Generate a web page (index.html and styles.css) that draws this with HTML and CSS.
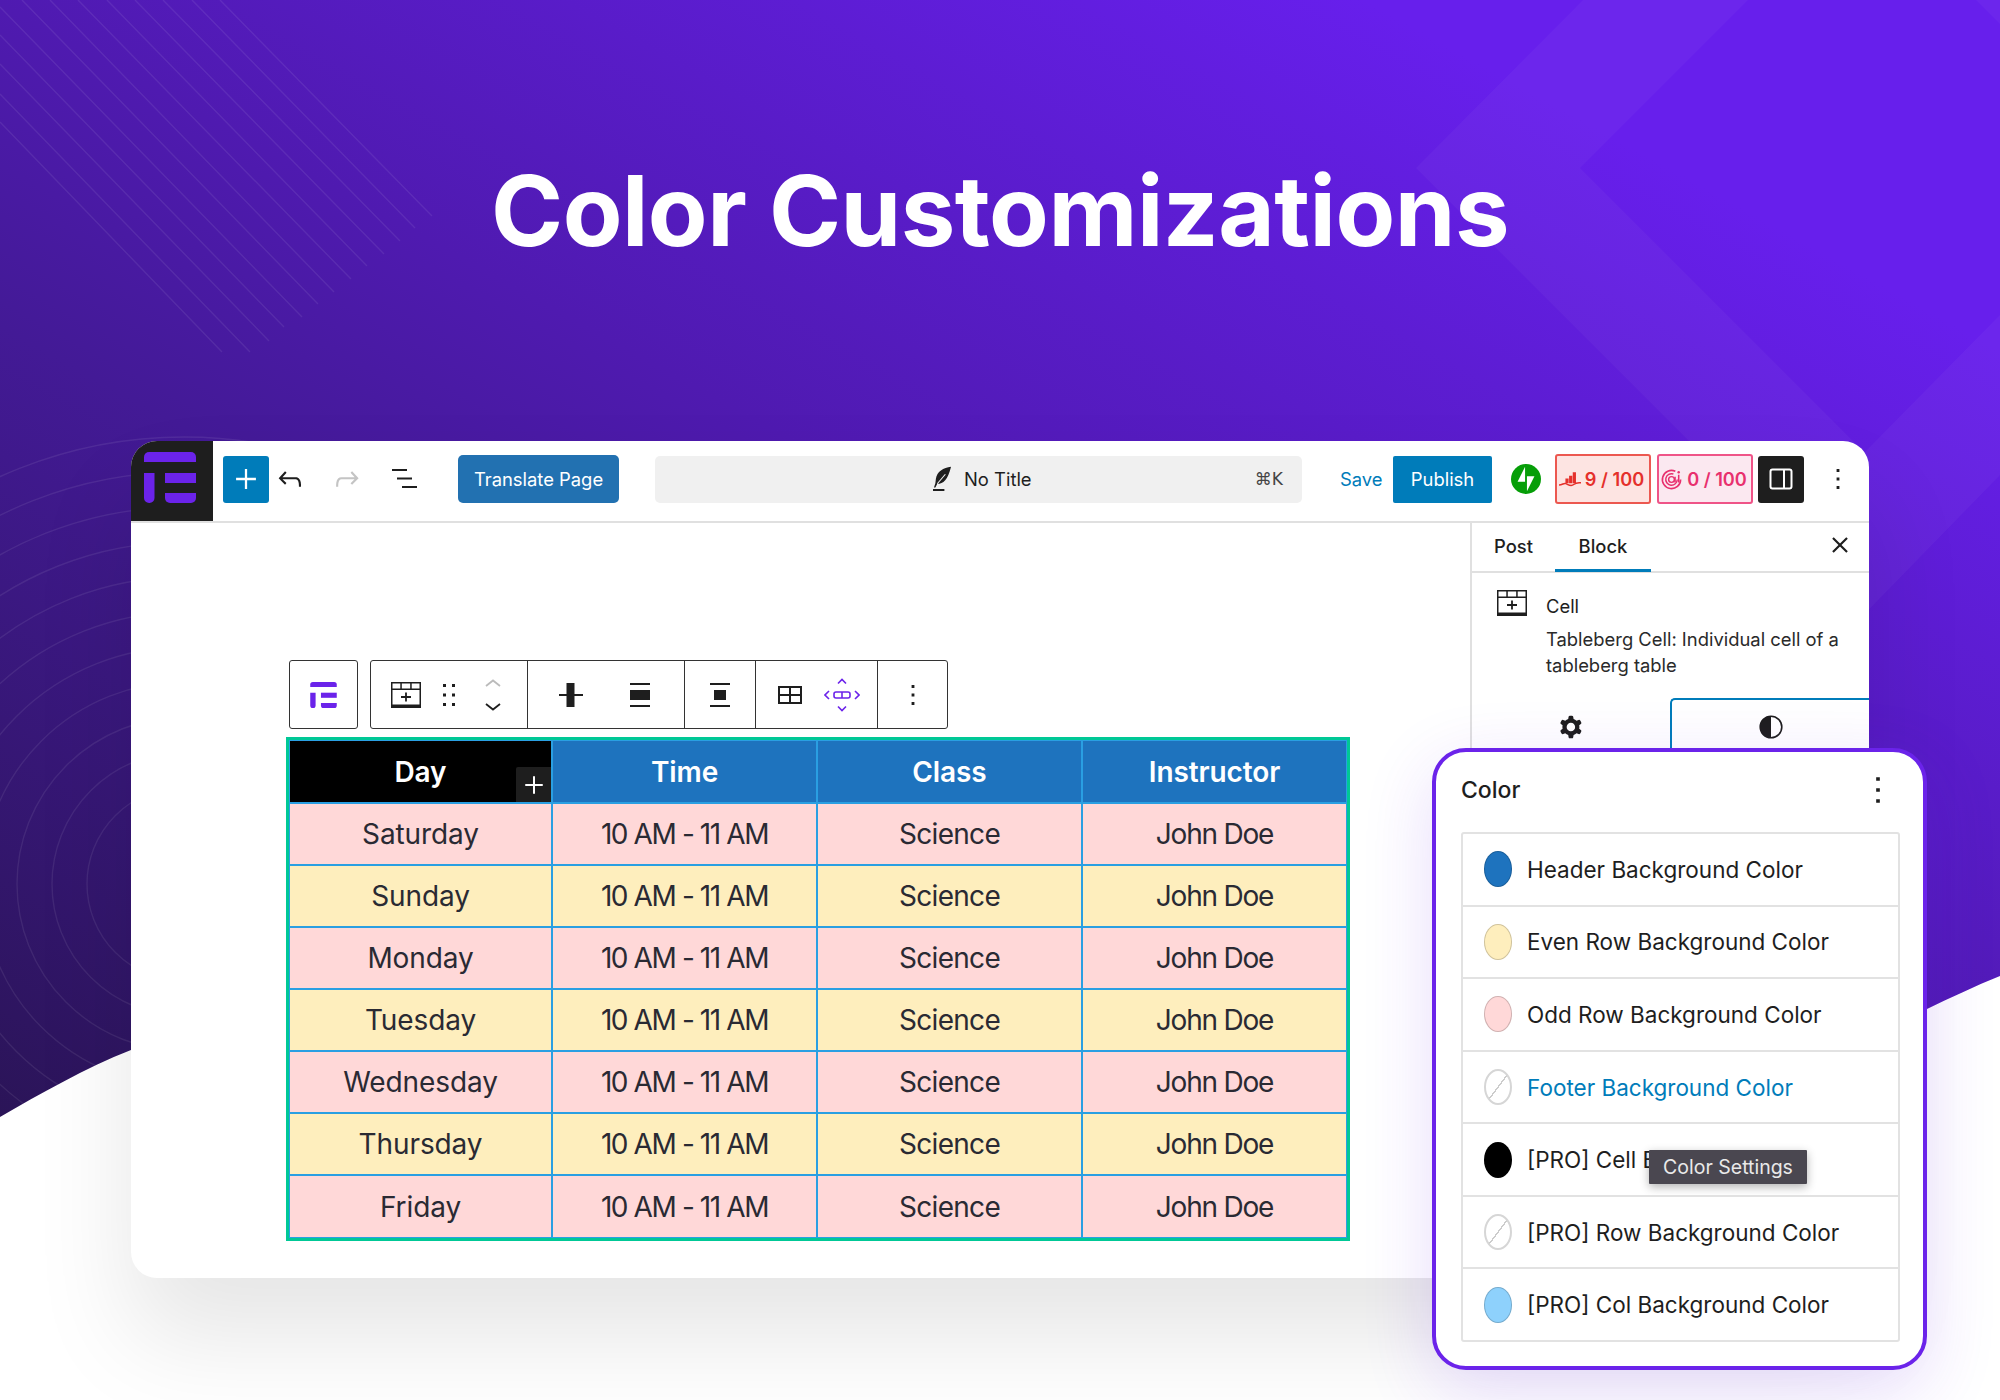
FILE: index.html
```html
<!DOCTYPE html>
<html lang="en">
<head>
<meta charset="utf-8">
<title>Color Customizations</title>
<link rel="stylesheet" href="styles.css">
</head>
<body>
<svg width="0" height="0" class="defs">
  <defs>
    <linearGradient id="heroGrad" gradientUnits="userSpaceOnUse" x1="0" y1="1137" x2="797" y2="-312">
      <stop offset="0" stop-color="#2a1456"/>
      <stop offset=".43" stop-color="#431a96"/>
      <stop offset=".6" stop-color="#4f1ab0"/>
      <stop offset="1" stop-color="#671fec"/>
    </linearGradient>
    <clipPath id="heroClip"><path d="M0 0H2000V976C1975 986 1950 998 1927 1009C1600 1180 1300 1240 1000 1240C600 1240 350 960 131 1050C85 1068 40 1094 0 1117Z"/></clipPath>
    <symbol id="tb-logo" viewBox="0 0 52 51">
      <path d="M5 0H47A5 5 0 0 1 52 5V10H0V5A5 5 0 0 1 5 0Z"/>
      <path d="M0 21H10.500V46A5 5 0 0 1 5.500 51H5A5 5 0 0 1 0 46Z"/>
      <rect x="21" y="21" width="31" height="10"/>
      <path d="M21 41H52V46A5 5 0 0 1 47 51H26A5 5 0 0 1 21 46Z"/>
    </symbol>
    <symbol id="cell-icon" viewBox="0 0 30 26">
      <path fill-rule="evenodd" d="M0 0H30V26H0ZM1.500 1.500V6.500H9.300V1.500ZM10.800 1.500V6.500H19.200V1.500ZM20.700 1.500V6.500H28.500V1.500ZM1.500 8V22.500H28.500V8ZM14.100 10.500H15.900V14.100H20V15.900H15.900V19.500H14.100V15.900H10V14.100H14.100Z"/>
    </symbol>
    <symbol id="kebab" viewBox="0 0 24 24">
      <path d="M13 19h-2v-2h2v2zm0-6h-2v-2h2v2zm0-6h-2V5h2v2z"/>
    </symbol>
  </defs>
</svg>

<div class="page">
  <svg class="backdrop" viewBox="0 0 2000 1400" aria-hidden="true">
    <g clip-path="url(#heroClip)">
      <rect width="2000" height="1400" fill="url(#heroGrad)"/>
      <path class="band" d="M1583 0H1748L1580 168L1860 448V612L1416 168Z"/>
      <path class="band" d="M2000 315L1800 518V680L2000 475ZM1976 0H2000V24Z"/>
      <g class="hairline">
        <path d="M220 0L432 216M192 0L415 228M163 0L400 241M135 0L384 254M107 0L367 266M78 0L351 279M50 0L334 292M22 0L318 304M0 7L302 317M0 35L284 327M0 64L269 341M0 94L250 352M0 122L222 352"/>
        <circle cx="184" cy="884" r="97"/>
        <circle cx="184" cy="884" r="132"/>
        <circle cx="184" cy="884" r="167"/>
        <circle cx="184" cy="884" r="202"/>
        <circle cx="184" cy="884" r="237"/>
        <circle cx="184" cy="884" r="272"/>
        <circle cx="184" cy="884" r="307"/>
        <circle cx="184" cy="884" r="342"/>
        <circle cx="184" cy="884" r="377"/>
        <circle cx="184" cy="884" r="412"/>
        <circle cx="184" cy="884" r="447"/>
      </g>
    </g>
  </svg>

  <header class="hero">
    <h1 class="hero-title">Color Customizations</h1>
  </header>

  <main class="editor">
    <div class="topbar">
      <div class="brand"><svg class="brand-logo"><use href="#tb-logo"/></svg></div>
      <button class="add-btn" type="button" aria-label="Add block"><svg viewBox="0 0 24 24" width="34" height="34"><path fill="#fff" d="M11.200 5h1.600v6.200H19v1.600h-6.200V19h-1.600v-6.200H5v-1.600h6.200z"/></svg></button>
      <svg class="ico-undo" viewBox="0 0 24 24"><path d="M18.300 11.700c-.6-.6-1.400-.9-2.300-.9H6.700l2.900-3.300-1.100-1-4.500 5L8.500 16l1-1.100-2.800-2.700H16c.5 0 .9.2 1.300.5 1 1 1 3.400 1 4.500v.3h1.500v-.2c0-1.500 0-4.300-1.500-5.600z"/></svg>
      <svg class="ico-redo" viewBox="0 0 24 24"><path d="M15.600 6.500l-1.100 1 2.900 3.300H8c-.9 0-1.700.3-2.300.9-1.400 1.500-1.400 4.200-1.400 5.600v.2h1.500v-.3c0-1.100 0-3.500 1-4.500.3-.3.700-.5 1.300-.5h9.200L14.500 15l1.100 1.100 4.600-4.600-4.600-5z"/></svg>
      <svg class="ico-list" viewBox="0 0 26 20"><path d="M0 1H15M5 9.500H20M10 18H25" stroke="#1e1e1e" stroke-width="2.200" fill="none"/></svg>
      <button class="translate-btn" type="button">Translate Page</button>
      <div class="doc-bar">
        <svg class="ico-feather" viewBox="0 0 20 26"><path d="M19 0C11 1 4 5 3 13L2.500 17.500L1 22H2.500L4.500 18C11 18 15.500 14 19 0Z" fill="#1e1e1e"/><path d="M4.500 18L13 8" stroke="#f0f0f0" stroke-width="1.200"/><path d="M0 24.500H12" stroke="#1e1e1e" stroke-width="2"/></svg>
        <span class="doc-title">No Title</span>
        <span class="doc-key">⌘K</span>
      </div>
      <span class="save-link">Save</span>
      <button class="publish-btn" type="button">Publish</button>
      <svg class="ico-jetpack" viewBox="0 0 32 32"><circle cx="16" cy="16" r="16" fill="#069e08"/><path fill="#fff" d="M15 19H7l8-16v16zM17 29V13h8z"/></svg>
      <div class="score score-red">
        <svg viewBox="0 0 24 18" width="22" height="17"><path fill="#e5302b" d="M7 8h3.500v5H7zM11 5h3.500v8H11zM15 1h3.500v12H15z"/><path d="M0 15C4 15 5 12.500 7.500 13.500S13 17 16 14.500S20 12.500 24 12.500" stroke="#e5302b" stroke-width="1.600" fill="none"/></svg>
        <span>9 / 100</span>
      </div>
      <div class="score score-pink">
        <svg viewBox="0 0 24 24" width="23" height="23"><path d="M21.500 12A9.500 9.500 0 1 1 16 3.400" stroke="#e8306e" stroke-width="1.700" fill="none"/><path d="M18 12A6 6 0 1 1 14 6.300" stroke="#e8306e" stroke-width="1.500" fill="none"/><circle cx="12" cy="12" r="3" stroke="#e8306e" stroke-width="1.500" fill="none"/><path d="M15.700 9V15M19.500 7V15" stroke="#e8306e" stroke-width="1.600"/><circle cx="19.500" cy="4.500" r="1.300" fill="#e8306e"/></svg>
        <span>0 / 100</span>
      </div>
      <button class="panel-toggle" type="button" aria-label="Settings"><svg viewBox="0 0 24 24" width="24" height="24"><rect x="1.500" y="2.500" width="21" height="19" rx="2" fill="none" stroke="#fff" stroke-width="2"/><path d="M15 2.500V21.500" stroke="#fff" stroke-width="2"/></svg></button>
      <svg class="ico-kebab"><use href="#kebab"/></svg>
    </div>

    <div class="workspace">
      <section class="canvas">
        <div class="block-toolbar">
          <div class="tb-box tb-logo-box"><svg class="tb-logo-small"><use href="#tb-logo"/></svg></div>
          <div class="tb-box tb-main">
            <div class="tb-seg tb-seg-a">
              <svg class="tb-cell"><use href="#cell-icon"/></svg>
              <svg class="tb-drag" viewBox="0 0 12 22"><path d="M0 0h3v3H0zM9 0h3v3H9zM0 9.500h3v3H0zM9 9.500h3v3H9zM0 19h3v3H0zM9 19h3v3H9z"/></svg>
              <svg class="tb-mover" viewBox="0 0 16 32"><path d="M1 7L8 1.500L15 7" stroke="#bbb" stroke-width="1.800" fill="none"/><path d="M1 25L8 30.500L15 25" stroke="#1e1e1e" stroke-width="1.800" fill="none"/></svg>
            </div>
            <div class="tb-seg tb-seg-b">
              <svg class="tb-ic" viewBox="0 0 26 26"><path d="M8.500 1H16.500V25H8.500V14H1V12H8.500ZM16.500 12H25V14H16.500Z" fill="#1e1e1e"/></svg>
              <svg class="tb-ic" viewBox="0 0 26 26"><path d="M3 1H23V3H3ZM3 8H23V18H3ZM3 23H23V25H3Z" fill="#1e1e1e"/></svg>
            </div>
            <div class="tb-seg tb-seg-c">
              <svg class="tb-ic" viewBox="0 0 26 26"><path d="M3 1H23V3H3ZM7 8H19V18H7ZM3 23H23V25H3Z" fill="#1e1e1e"/></svg>
            </div>
            <div class="tb-seg tb-seg-d">
              <svg class="tb-ic" viewBox="0 0 26 22"><path fill-rule="evenodd" fill="#1e1e1e" d="M1 2H25V20H1ZM3 4V10H12V4ZM14 4V10H23V4ZM3 12V18H12V12ZM14 12V18H23V12Z"/></svg>
              <svg class="tb-span" viewBox="0 0 36 34" fill="none" stroke="#6b23ea" stroke-width="1.600"><path d="M14 5.500L18 1.500L22 5.500M14 28.500L18 32.500L22 28.500M5 13L1 17L5 21M31 13L35 17L31 21"/><rect x="10" y="14" width="16" height="6" rx="2"/><path d="M18 14V20"/></svg>
            </div>
            <div class="tb-seg tb-seg-e"><svg class="tb-kebab"><use href="#kebab"/></svg></div>
          </div>
        </div>

        <div class="table-frame">
          <table class="schedule">
            <colgroup><col class="col-day"><col class="col-rest"><col class="col-rest"><col class="col-last"></colgroup>
            <thead>
              <tr><th class="th-active">Day<span class="cell-add"><svg viewBox="0 0 24 24" width="30" height="30"><path fill="#fff" d="M11.200 5h1.600v6.200H19v1.600h-6.200V19h-1.600v-6.200H5v-1.600h6.200z"/></svg></span></th><th>Time</th><th>Class</th><th>Instructor</th></tr>
            </thead>
            <tbody>
              <tr><td>Saturday</td><td>10 AM - 11 AM</td><td>Science</td><td>John Doe</td></tr>
              <tr><td>Sunday</td><td>10 AM - 11 AM</td><td>Science</td><td>John Doe</td></tr>
              <tr><td>Monday</td><td>10 AM - 11 AM</td><td>Science</td><td>John Doe</td></tr>
              <tr><td>Tuesday</td><td>10 AM - 11 AM</td><td>Science</td><td>John Doe</td></tr>
              <tr><td>Wednesday</td><td>10 AM - 11 AM</td><td>Science</td><td>John Doe</td></tr>
              <tr><td>Thursday</td><td>10 AM - 11 AM</td><td>Science</td><td>John Doe</td></tr>
              <tr><td>Friday</td><td>10 AM - 11 AM</td><td>Science</td><td>John Doe</td></tr>
            </tbody>
          </table>
        </div>
      </section>

      <aside class="sidebar">
        <div class="side-tabs">
          <span class="side-tab">Post</span>
          <span class="side-tab side-tab-active">Block</span>
          <svg class="ico-close" viewBox="0 0 24 24"><path d="M5.500 5.500L18.500 18.500M18.500 5.500L5.500 18.500" stroke="#1e1e1e" stroke-width="2" fill="none"/></svg>
        </div>
        <div class="block-info">
          <svg class="side-cell"><use href="#cell-icon"/></svg>
          <div class="block-copy">
            <h2 class="block-name">Cell</h2>
            <p class="block-desc">Tableberg Cell: Individual cell of a tableberg table</p>
          </div>
        </div>
        <div class="inspector-tabs">
          <div class="insp-tab"><svg viewBox="0 0 24 24" width="34" height="34"><path fill="#1e1e1e" fill-rule="evenodd" d="M10.289 4.836A1 1 0 0111.275 4h1.306a1 1 0 01.987.836l.244 1.466c.787.26 1.503.679 2.108 1.218l1.393-.522a1 1 0 011.216.437l.653 1.13a1 1 0 01-.23 1.273l-1.148.944a6.025 6.025 0 010 2.435l1.149.946a1 1 0 01.23 1.272l-.653 1.13a1 1 0 01-1.216.437l-1.394-.522c-.605.54-1.32.958-2.108 1.218l-.244 1.466a1 1 0 01-.987.836h-1.306a1 1 0 01-.986-.836l-.244-1.466a5.995 5.995 0 01-2.108-1.218l-1.394.522a1 1 0 01-1.217-.436l-.653-1.131a1 1 0 01.23-1.272l1.149-.946a6.026 6.026 0 010-2.435l-1.148-.944a1 1 0 01-.23-1.272l.653-1.131a1 1 0 011.217-.437l1.393.522a5.994 5.994 0 012.108-1.218l.244-1.466zM14.929 12a3 3 0 11-6 0 3 3 0 016 0z"/></svg></div>
          <div class="insp-tab insp-tab-active"><svg viewBox="0 0 24 24" width="24" height="24"><circle cx="12" cy="12" r="10.800" fill="none" stroke="#1e1e1e" stroke-width="1.600"/><path d="M12 1.200A10.800 10.800 0 0 0 12 22.800Z" fill="#1e1e1e"/></svg></div>
        </div>
      </aside>
    </div>
  </main>

  <section class="color-panel">
    <div class="panel-head">
      <h2 class="panel-title">Color</h2>
      <svg class="panel-kebab"><use href="#kebab"/></svg>
    </div>
    <ul class="color-list">
      <li class="color-row"><i class="swatch sw-blue"></i>Header Background Color</li>
      <li class="color-row"><i class="swatch sw-yellow"></i>Even Row Background Color</li>
      <li class="color-row"><i class="swatch sw-pink"></i>Odd Row Background Color</li>
      <li class="color-row color-row-active"><i class="swatch sw-none"></i>Footer Background Color</li>
      <li class="color-row"><i class="swatch sw-black"></i>[PRO] Cell Border Color<span class="tooltip">Color Settings</span></li>
      <li class="color-row"><i class="swatch sw-none"></i>[PRO] Row Background Color</li>
      <li class="color-row"><i class="swatch sw-sky"></i>[PRO] Col Background Color</li>
    </ul>
  </section>
</div>
</body>
</html>
```

FILE: styles.css
```css
* { box-sizing: border-box; }
html, body { margin: 0; padding: 0; background: #fff; }
body { font-family: Inter, "Liberation Sans", sans-serif; color: #1e1e1e; }
button { font: inherit; border: 0; padding: 0; cursor: pointer; }
svg { display: block; flex: none; }
.defs { position: absolute; }

.page { position: relative; width: 2000px; height: 1400px; overflow: hidden; background: #fff; }
.backdrop { position: absolute; left: 0; top: 0; width: 2000px; height: 1400px; }
.band { fill: rgba(255, 255, 255, .035); }
.hairline { fill: none; stroke: rgba(255, 255, 255, .08); stroke-width: 1.400; }

.hero { position: relative; height: 441px; display: flex; justify-content: center; padding-top: 153px; }
.hero-title { margin: 0; font-size: 97.500px; line-height: 116px; font-weight: 700; color: #fff; letter-spacing: -.5px; }

.editor { position: relative; width: 1738px; height: 837px; margin-left: 131px; background: #fff; border-radius: 26px; box-shadow: 0 60px 100px rgba(0, 0, 0, .1); overflow: hidden; }

.topbar { display: flex; align-items: center; height: 82px; padding-bottom: 4px; border-bottom: 2px solid #e0e0e0; }
.brand { width: 82px; height: 80px; margin-bottom: -4px; background: #1e1e1e; display: flex; align-items: flex-start; padding: 11px 0 0 13px; flex: none; }
.brand-logo { width: 52px; height: 51px; fill: #6b23ea; }
.add-btn { width: 46px; height: 47px; margin-left: 10px; background: #007cba; border-radius: 3px; display: flex; align-items: center; justify-content: center; }
.ico-undo { width: 34px; height: 34px; margin-left: 4px; fill: #1e1e1e; }
.ico-redo { width: 34px; height: 34px; margin-left: 23px; fill: #c4c4c4; }
.ico-list { width: 26px; height: 20px; margin-left: 28px; }
.translate-btn { width: 161px; height: 48px; margin-left: 40px; background: #2271b1; color: #fff; border-radius: 5px; font-size: 18.400px; }

.doc-bar { position: relative; width: 647px; height: 47px; margin-left: 36px; background: #f0f0f0; border-radius: 5px; display: flex; align-items: center; padding-left: 278px; }
.ico-feather { width: 19px; height: 26px; }
.doc-title { margin-left: 12px; font-size: 18.400px; }
.doc-key { margin-left: auto; margin-right: 19px; font-size: 17px; color: #444; font-family: "DejaVu Sans", sans-serif; }

.save-link { margin-left: 38px; width: 41px; color: #007cba; font-size: 18.400px; }
.publish-btn { width: 99px; height: 47px; margin-left: 12px; background: #007cba; color: #fff; font-size: 18.400px; border-radius: 2px; }
.ico-jetpack { width: 30px; height: 30px; margin-left: 19px; }
.score { height: 50px; display: flex; align-items: center; justify-content: center; gap: 4px; padding-right: 3px; border: 2px solid; border-radius: 3px; font-size: 18.200px; font-weight: 600; }
.score-red { width: 96px; margin-left: 14px; border-color: #ec5850; background: #fde4e2; color: #e5302b; }
.score-pink { width: 96px; margin-left: 6px; border-color: #ef5488; background: #fbe8f0; color: #e8306e; }
.panel-toggle { width: 46px; height: 47px; margin-left: 5px; background: #1e1e1e; border-radius: 3px; display: flex; align-items: center; justify-content: center; }
.ico-kebab { width: 34px; height: 34px; margin-left: 17px; fill: #1e1e1e; }

.workspace { display: flex; height: 755px; }
.canvas { flex: 1; padding: 137px 0 0 155px; }

.block-toolbar { display: flex; gap: 12px; height: 69px; margin-left: 3px; }
.tb-box { border: 1.500px solid #333; border-radius: 3px; background: #fff; display: flex; align-items: center; }
.tb-logo-box { width: 69px; justify-content: center; }
.tb-logo-small { width: 27px; height: 26px; fill: #6b23ea; }
.tb-main { width: 578px; }
.tb-seg { height: 100%; display: flex; align-items: center; border-right: 1.500px solid #333; }
.tb-seg-a { width: 157px; padding-left: 20px; }
.tb-seg-b { width: 157px; padding-left: 30px; gap: 43px; }
.tb-seg-c { width: 71px; padding-left: 22px; }
.tb-seg-d { width: 122px; padding-left: 21px; gap: 21px; }
.tb-seg-e { flex: 1; border-right: 0; justify-content: center; }
.tb-cell { width: 30px; height: 26px; fill: #1e1e1e; }
.tb-drag { width: 12px; height: 22px; margin-left: 22px; fill: #1e1e1e; }
.tb-mover { width: 16px; height: 32px; margin-left: 30px; }
.tb-ic { width: 26px; height: 26px; }
.tb-span { width: 36px; height: 34px; }
.tb-kebab { width: 34px; height: 34px; fill: #1e1e1e; }

.table-frame { width: 1064px; margin-top: 8px; padding: 1px; background: #2a9fe2; border: 3px solid #00c896; }
.schedule { width: 1056px; border-collapse: collapse; table-layout: fixed; font-size: 28px; }
.col-day { width: 262px; }
.col-rest { width: 265px; }
.col-last { width: 264px; }
.schedule th, .schedule td { border: 2px solid #2a9fe2; text-align: center; padding: 0; height: 62px; }
.schedule tr > :first-child { border-left: 0; }
.schedule tr > :last-child { border-right: 0; }
.schedule thead tr > * { border-top: 0; }
.schedule tbody tr:last-child > * { border-bottom: 0; }
.schedule thead tr { height: 62px; }
.schedule tbody tr { height: 62px; }
.schedule th { background: #1e73be; color: #fff; font-weight: 600; letter-spacing: -.1px; }
.schedule .th-active { position: relative; background: #000; }
.schedule td { color: #2a2a33; font-weight: 400; letter-spacing: -.1px; }
.schedule td:nth-child(2) { letter-spacing: -1.400px; }
.schedule td:nth-child(3) { letter-spacing: -.7px; }
.schedule td:nth-child(4) { letter-spacing: -1.200px; }
.schedule tbody tr:nth-child(odd) td { background: #ffd8d8; }
.schedule tbody tr:nth-child(even) td { background: #feeebd; }
.cell-add { position: absolute; right: 0; bottom: 0; width: 35px; height: 35px; background: #1e1e1e; display: flex; align-items: center; justify-content: center; border-radius: 2px 0 0 0; }

.sidebar { width: 399px; flex: none; border-left: 2px solid #e0e0e0; }
.side-tabs { position: relative; height: 50px; display: flex; align-items: center; padding-left: 22px; border-bottom: 2px solid #e0e0e0; font-size: 18.400px; font-weight: 500; }
.side-tab { height: 50px; padding-bottom: 2px; display: flex; align-items: center; }
.side-tab-active { width: 96px; margin-left: 22px; justify-content: center; box-shadow: inset 0 -3px 0 #007cba; }
.ico-close { position: absolute; right: 16px; top: 9px; width: 26px; height: 26px; }
.block-info { display: flex; padding: 16px 20px 0 25px; }
.side-cell { width: 30px; height: 26px; fill: #1e1e1e; margin-top: 1px; }
.block-copy { margin-left: 19px; }
.block-name { margin: 4px 0 0; font-size: 18.400px; font-weight: 400; line-height: 26px; }
.block-desc { margin: 7px 0 0; font-size: 18.400px; line-height: 26px; color: #2a2a2a; }
.inspector-tabs { display: flex; height: 60px; margin-top: 20px; }
.insp-tab { width: 198px; display: flex; align-items: flex-start; justify-content: center; padding-top: 12px; }
.insp-tab-active { flex: 1; border: 2px solid #007cba; border-width: 2px 0 0 2px; border-radius: 5px 0 0 0; padding-top: 15px; }

.color-panel { position: absolute; left: 1432px; top: 748px; width: 495px; height: 622px; padding: 0 23px 24px 25px; background: #fff; border: 4px solid #6b23ea; border-radius: 34px; box-shadow: 0 20px 70px rgba(107, 35, 234, .16); display: flex; flex-direction: column; }
.panel-head { height: 80px; flex: none; display: flex; align-items: center; justify-content: space-between; padding-bottom: 5px; }
.panel-title { margin: 0; font-size: 23px; font-weight: 500; }
.panel-kebab { width: 44px; height: 44px; margin-right: 0; fill: #1e1e1e; }
.color-list { list-style: none; margin: 0; padding: 0; flex: 1; display: flex; flex-direction: column; border: 2px solid #e2e2e2; border-radius: 3px; }
.color-row { position: relative; flex: 1; display: flex; align-items: center; padding-left: 21px; font-size: 22.500px; color: #1e1e1e; }
.color-row + .color-row { border-top: 2px solid #e2e2e2; }
.color-row-active { color: #007cba; }
.swatch { width: 28px; height: 36px; margin-right: 15px; border-radius: 50%; border: 1.500px solid rgba(0, 0, 0, .18); flex: none; }
.sw-blue { background: #1e73be; }
.sw-yellow { background: #feeebd; }
.sw-pink { background: #ffd8d8; }
.sw-black { background: #000; }
.sw-sky { background: #8ed1fc; }
.sw-none { background: linear-gradient(to bottom right, transparent 48.500%, #ccc 48.500%, #ccc 52%, transparent 52%); border: 2px solid #d6d6d6; }
.tooltip { position: absolute; left: 186px; top: 26px; width: 158px; height: 34px; background: #4a4750; color: #e9e9e9; font-size: 19.500px; border-radius: 1px; display: flex; align-items: center; justify-content: center; box-shadow: 0 3px 10px rgba(0, 0, 0, .3); }
```
